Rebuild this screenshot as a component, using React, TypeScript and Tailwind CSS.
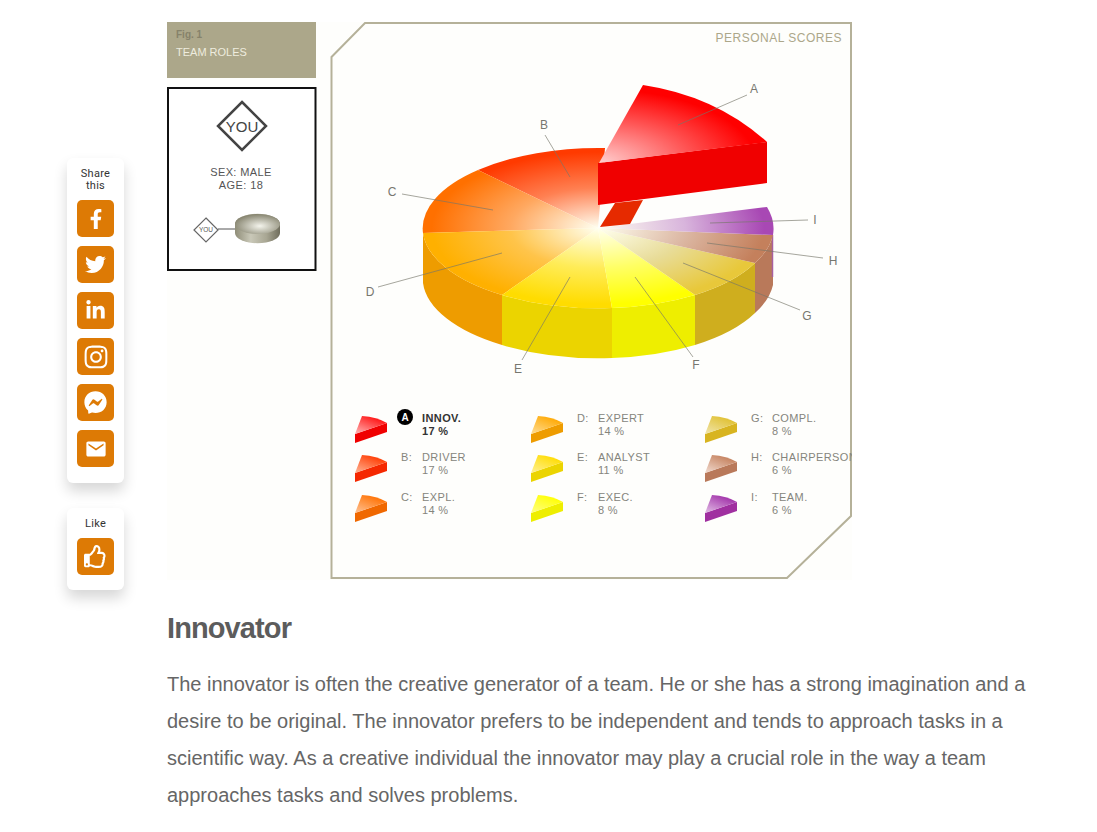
import React from 'react';
import { FaFacebookF, FaTwitter, FaLinkedinIn, FaInstagram, FaFacebookMessenger, FaRegThumbsUp } from 'react-icons/fa';
import { IoMdMail } from 'react-icons/io';

const CX = 598;
const CY = 228;
const RX = 175;
const RY = 80;
const DEPTH = 50;

// top faces of the pie, anti-clockwise from B round to I
const slices = [
  { id: 'b', from: [605, 148], to: [478, 170], color: '#ff3a00', mid: '#ff8052' },
  { id: 'c', from: [478, 170], to: [423, 233], color: '#ff7000', mid: '#ffa860' },
  { id: 'd', from: [423, 233], to: [502, 295], color: '#ffb000', mid: '#ffc44a' },
  { id: 'e', from: [502, 295], to: [612, 308], color: '#ffdc00', mid: '#ffec58' },
  { id: 'f', from: [612, 308], to: [695, 295], color: '#ffff00', mid: '#ffff66' },
  { id: 'g', from: [695, 295], to: [755, 263], color: '#e8c83a', mid: '#e8dc98' },
  { id: 'h', from: [755, 263], to: [773, 235], color: '#c4805c', mid: '#dcb8a4' },
  { id: 'i', from: [773, 235], to: [767, 207], color: '#a848b4', mid: '#d8b4dc' },
];

const walls = [
  { from: [423, 233], to: [502, 295], color: '#ee9c00' },
  { from: [502, 295], to: [612, 308], color: '#ebd400' },
  { from: [612, 308], to: [695, 295], color: '#eeee00' },
  { from: [695, 295], to: [755, 263], color: '#cfae1e' },
  { from: [755, 263], to: [773, 235], color: '#b9795a' },
];

const leaders = [
  { label: 'A', x: 754, y: 93, line: [747, 95, 678, 125] },
  { label: 'B', x: 544, y: 129, line: [545, 135, 570, 177] },
  { label: 'C', x: 392, y: 196, line: [402, 194, 493, 210] },
  { label: 'D', x: 370, y: 296, line: [378, 287, 502, 253] },
  { label: 'E', x: 518, y: 373, line: [522, 360, 570, 277] },
  { label: 'F', x: 696, y: 369, line: [693, 357, 635, 277] },
  { label: 'G', x: 807, y: 320, line: [800, 310, 683, 263] },
  { label: 'H', x: 833, y: 265, line: [823, 258, 707, 243] },
  { label: 'I', x: 815, y: 224, line: [808, 220, 710, 223] },
];

const legend = [
  { key: 'A', name: 'INNOV.', pct: '17 %', x: 355, y: 416, top: '#ff1010', pale: '#ffb0b0', side: '#f00000', active: true },
  { key: 'B:', name: 'DRIVER', pct: '17 %', x: 355, y: 455, top: '#ff3a00', pale: '#ffb090', side: '#f52800' },
  { key: 'C:', name: 'EXPL.', pct: '14 %', x: 355, y: 495, top: '#ff7000', pale: '#ffc090', side: '#f06800' },
  { key: 'D:', name: 'EXPERT', pct: '14 %', x: 531, y: 416, top: '#ffa800', pale: '#ffdc90', side: '#ee9c00' },
  { key: 'E:', name: 'ANALYST', pct: '11 %', x: 531, y: 455, top: '#ffdc00', pale: '#fff090', side: '#ebd400' },
  { key: 'F:', name: 'EXEC.', pct: '8 %', x: 531, y: 495, top: '#ffff00', pale: '#ffff80', side: '#eeee00' },
  { key: 'G:', name: 'COMPL.', pct: '8 %', x: 705, y: 416, top: '#e0c030', pale: '#f0e4a8', side: '#d8b420' },
  { key: 'H:', name: 'CHAIRPERSON', pct: '6 %', x: 705, y: 455, top: '#c4805c', pale: '#f0d8cc', side: '#b9795a' },
  { key: 'I:', name: 'TEAM.', pct: '6 %', x: 705, y: 495, top: '#a030a8', pale: '#e0b8e4', side: '#a030a0' },
];

const sliceD = (p1: number[], p2: number[]) =>
  `M${CX} ${CY} L${p1[0]} ${p1[1]} A${RX} ${RY} 0 0 0 ${p2[0]} ${p2[1]} Z`;

const wallD = (p1: number[], p2: number[]) =>
  `M${p1[0]} ${p1[1]} A${RX} ${RY} 0 0 0 ${p2[0]} ${p2[1]} L${p2[0]} ${p2[1] + DEPTH} A${RX} ${RY} 0 0 1 ${p1[0]} ${p1[1] + DEPTH} Z`;

const ShareButton = ({ children }: { children: React.ReactNode }) => (
  <div className="flex h-[37px] w-[37px] items-center justify-center rounded-[5px] bg-[#dd7a05] text-white">
    {children}
  </div>
);

const Figure = () => (
  <svg viewBox="167 22 685 558" width={685} height={558} className="block" style={{ fontFamily: '"Liberation Sans", Arial, sans-serif' }}>
    <defs>
      {slices.map((s) => (
        <radialGradient
          key={s.id}
          id={`top-${s.id}`}
          gradientUnits="userSpaceOnUse"
          cx={0}
          cy={0}
          r={1}
          gradientTransform={`translate(${CX} ${CY}) scale(${RX} ${RY})`}
        >
          <stop offset="0" stopColor="#fffff0" />
          <stop offset="0.5" stopColor={s.mid} />
          <stop offset="0.95" stopColor={s.color} />
        </radialGradient>
      ))}
      <radialGradient id="top-a" gradientUnits="userSpaceOnUse" cx={0} cy={0} r={1} gradientTransform="translate(599 163) scale(175 82)">
        <stop offset="0" stopColor="#ffd0d0" />
        <stop offset="0.5" stopColor="#ff5a5a" />
        <stop offset="0.9" stopColor="#ff0000" />
      </radialGradient>
      {legend.map((l) => (
        <linearGradient key={l.key} id={`wedge-${l.key[0]}`} x1="0.8" y1="0" x2="0.1" y2="1">
          <stop offset="0.1" stopColor={l.top} />
          <stop offset="1" stopColor={l.pale} />
        </linearGradient>
      ))}
      <linearGradient id="disc-side" x1="0" y1="0" x2="1" y2="0">
        <stop offset="0" stopColor="#8f8d78" />
        <stop offset="0.35" stopColor="#c9c8b8" />
        <stop offset="0.7" stopColor="#a8a693" />
        <stop offset="1" stopColor="#6f6d5c" />
      </linearGradient>
      <radialGradient id="disc-top" cx="0.55" cy="0.6" r="0.6">
        <stop offset="0" stopColor="#f4f4ec" />
        <stop offset="1" stopColor="#85836e" />
      </radialGradient>
    </defs>

    <rect x={167} y={22} width={685} height={558} fill="#fefefc" />

    {/* left column */}
    <rect x={167} y={22} width={149} height={56} fill="#aca78a" />
    <text x={176} y={38} fontSize={10} fontWeight={700} fill="#86826a">Fig. 1</text>
    <text x={176} y={56} fontSize={11} fill="#eeecdf">TEAM ROLES</text>
    <rect x={168} y={88} width={147.5} height={182} fill="#ffffff" stroke="#111111" strokeWidth={2} />
    <polygon points="242,102 266,126 242,150 218,126" fill="none" stroke="#444444" strokeWidth={2.5} />
    <text x={242} y={132} fontSize={15} textAnchor="middle" fill="#444444">YOU</text>
    <text x={241} y={176} fontSize={11} letterSpacing={0.4} textAnchor="middle" fill="#555555">SEX: MALE</text>
    <text x={241} y={189} fontSize={11} letterSpacing={0.4} textAnchor="middle" fill="#555555">AGE: 18</text>
    <polygon points="206,218 218,230 206,242 194,230" fill="none" stroke="#666666" strokeWidth={1.2} />
    <text x={206} y={232} fontSize={6.5} textAnchor="middle" fill="#555555">YOU</text>
    <line x1={218} y1={229} x2={236} y2={229} stroke="#555555" />
    <path d="M235 224 A22 10 0 0 1 280 224 L280 233 A22 10 0 0 1 235 233 Z" fill="url(#disc-side)" />
    <ellipse cx={257.5} cy={224} rx={22.5} ry={10} fill="url(#disc-top)" />

    {/* frame */}
    <polygon points="331.5,57 365,23 851,23 851,516 787,578 331.5,578" fill="none" stroke="#b5b199" strokeWidth={2} />
    <text x={842} y={42} fontSize={12} letterSpacing={0.5} textAnchor="end" fill="#aca78a">PERSONAL SCORES</text>

    {/* pie */}
    {walls.map((w, i) => (
      <path key={i} d={wallD(w.from, w.to)} fill={w.color} />
    ))}
    <line x1={772.5} y1={235} x2={772.5} y2={277} stroke="#a860a0" strokeWidth={1.5} />
    {slices.map((s) => (
      <path key={s.id} d={sliceD(s.from, s.to)} fill={`url(#top-${s.id})`} />
    ))}
    <polygon points="615,203 643,200 630,224 600,227" fill="#e62a00" />
    <path d="M598 163 L767 142 L767 183 L598 205 Z" fill="#f00000" />
    <path d="M599 163 L643 85 Q716 96 767 142 Z" fill="url(#top-a)" />

    {leaders.map((l) => (
      <g key={l.label}>
        <line x1={l.line[0]} y1={l.line[1]} x2={l.line[2]} y2={l.line[3]} stroke="#77776a" strokeOpacity={0.65} strokeWidth={1} />
        <text x={l.x} y={l.y} fontSize={12} textAnchor="middle" fill="#77776f">{l.label}</text>
      </g>
    ))}

    {/* legend */}
    {legend.map((l) => (
      <g key={l.key}>
        <g transform={`translate(${l.x} ${l.y})`}>
          <path d="M0 18 L0 27 L32 16 L32 7 Z" fill={l.side} />
          <path d="M0 18 L7 0 Q22 1 32 7 Z" fill={`url(#wedge-${l.key[0]})`} />
        </g>
        {l.active ? (
          <g>
            <circle cx={405} cy={417} r={8} fill="#000000" />
            <text x={405} y={421} fontSize={10} fontWeight={700} textAnchor="middle" fill="#ffffff">A</text>
          </g>
        ) : (
          <text x={l.x + 46} y={l.y + 6} fontSize={11} letterSpacing={0.4} fill="#85857c">{l.key}</text>
        )}
        <text x={l.x + 67} y={l.y + 6} fontSize={11} letterSpacing={0.4} fontWeight={l.active ? 700 : 400} fill={l.active ? '#333333' : '#85857c'}>{l.name}</text>
        <text x={l.x + 67} y={l.y + 19} fontSize={11} letterSpacing={0.3} fontWeight={l.active ? 700 : 400} fill={l.active ? '#333333' : '#85857c'}>{l.pct}</text>
      </g>
    ))}
  </svg>
);

export default function App() {
  return (
    <div className="relative min-h-[832px] overflow-hidden bg-white font-['Liberation_Sans',Arial,sans-serif]">
      <div className="absolute left-[67px] top-[158px] flex flex-col gap-[25px]">
        <div className="flex w-[57px] flex-col items-center gap-[9px] rounded-md bg-white pt-[10px] pb-[16px] shadow-[0_8px_14px_rgba(0,0,0,0.16)]">
          <div className="-mb-px text-center font-['Roboto',sans-serif] text-[11px] leading-[12px] tracking-[0.3px] text-[#333333]">
            Share<br />this
          </div>
          <ShareButton><FaFacebookF size={20} /></ShareButton>
          <ShareButton><FaTwitter size={21} /></ShareButton>
          <ShareButton><FaLinkedinIn size={21} /></ShareButton>
          <ShareButton><FaInstagram size={26} /></ShareButton>
          <ShareButton><FaFacebookMessenger size={23} /></ShareButton>
          <ShareButton><IoMdMail size={22} /></ShareButton>
        </div>
        <div className="flex w-[57px] flex-col items-center gap-[8px] rounded-md bg-white pt-[10px] pb-[15px] shadow-[0_8px_14px_rgba(0,0,0,0.16)]">
          <div className="text-center font-['Roboto',sans-serif] text-[11px] leading-[12px] tracking-[0.3px] text-[#333333]">Like</div>
          <ShareButton><FaRegThumbsUp size={23} /></ShareButton>
        </div>
      </div>

      <main className="pl-[167px] pt-[22px]">
        <Figure />
        <h2 className="mt-[30px] text-[29px] font-bold leading-[36px] tracking-[-0.9px] text-[#5c5c5c]">Innovator</h2>
        <p className="mt-[20px] w-[870px] text-[20px] leading-[37px] text-[#666666]">
          The innovator is often the creative generator of a team. He or she has a strong imagination and a desire to be original. The innovator prefers to be independent and tends to approach tasks in a scientific way. As a creative individual the innovator may play a crucial role in the way a team approaches tasks and solves problems.
        </p>
      </main>
    </div>
  );
}
